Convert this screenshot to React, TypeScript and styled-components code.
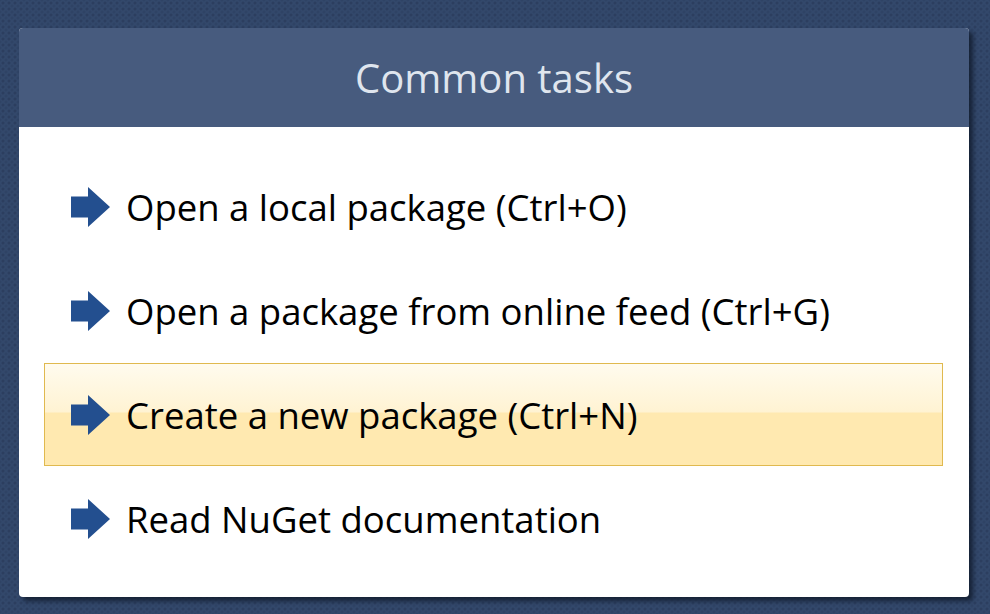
import React from 'react'
import styled, { createGlobalStyle } from 'styled-components';

const GlobalStyles = createGlobalStyle`
    html, body {
        margin: 0;
        padding: 0;
    }
    body {
        background-color: #33486b;
        background-image:
            radial-gradient(circle at 50% 50%, #2c3e5f 0 1.2px, transparent 1.8px),
            radial-gradient(circle at 50% 50%, #2f4365 0 1.2px, transparent 1.8px);
        background-size: 6px 6px, 6px 6px;
        background-position: 0 0, 3px 3px;
        font-family: "Open Sans", "Noto Sans", sans-serif;
    }
`;

const Page = styled.div`
    width: 990px;
    height: 614px;
    box-sizing: border-box;
    padding: 28px 21px 0 19px;
`;

const Card = styled.div`
    height: 569px;
    display: flex;
    flex-direction: column;
    background: #ffffff;
    border-radius: 4px;
    overflow: hidden;
    box-shadow: 4px 4px 4px rgba(15, 24, 40, 0.75);
`;

const Header = styled.div`
    height: 99px;
    flex-shrink: 0;
    display: flex;
    align-items: center;
    justify-content: center;
    background: #475b7e;
    color: #dfe5ee;
    font-size: 40px;
    font-weight: 400;
`;

const TaskList = styled.div`
    display: flex;
    flex-direction: column;
    padding: 28px 26px 0 25px;
`;

const TaskRow = styled.div<{ $active?: boolean }>`
    height: 103px;
    box-sizing: border-box;
    display: flex;
    align-items: center;
    gap: 15px;
    padding-left: 26px;
    padding-top: 1px;
    margin-bottom: 1px;
    border: 1px solid ${props => props.$active ? '#e0b94f' : 'transparent'};
    background: ${props => props.$active
        ? 'linear-gradient(to bottom, #fffbee 0%, #fff3d3 47%, #ffe9b0 49%, #ffe9b0 100%)'
        : 'transparent'};
    color: #000000;
    font-size: 36.5px;
    cursor: pointer;
`;

const TaskText = styled.span`
    line-height: 1;
    white-space: nowrap;
`;

const Arrow = () => (
    <svg width="40" height="40" viewBox="0 0 40 40">
        <path d="M0 9.5 H17 V0 L39 20 L17 40 V30.5 H0 Z" fill="#234f8f" />
    </svg>
);

const tasks = [
    { label: 'Open a local package (Ctrl+O)' },
    { label: 'Open a package from online feed (Ctrl+G)' },
    { label: 'Create a new package (Ctrl+N)', active: true },
    { label: 'Read NuGet documentation' },
];

function App() {
    return (
        <>
            <GlobalStyles />
            <Page>
                <Card>
                    <Header>Common tasks</Header>
                    <TaskList>
                        {tasks.map(task => (
                            <TaskRow key={task.label} $active={task.active}>
                                <Arrow />
                                <TaskText>{task.label}</TaskText>
                            </TaskRow>
                        ))}
                    </TaskList>
                </Card>
            </Page>
        </>
    )
}

export default App;
